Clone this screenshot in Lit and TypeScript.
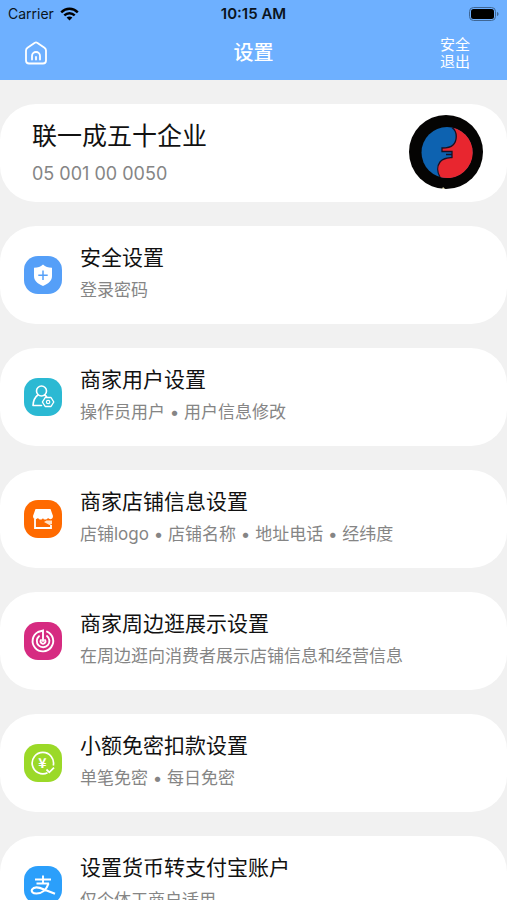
import { LitElement, html, svg, css } from "lit";
import { customElement } from "lit/decorators.js";

interface Entry {
  title: string;
  note: string;
  tone: string;
  icon: unknown;
}

const shield = svg`
  <path d="M19 8.500C21.500 10.800 24 11.500 28 11.700V20C28 24.600 24.800 27.500 19 30C13.200 27.500 10 24.600 10 20V11.700C14 11.500 16.500 10.800 19 8.500Z" fill="#fff"/>
  <path d="M19 14.500V24M14.300 19.200H23.700" fill="none" stroke="#559ff8" stroke-width="1.500"/>`;

const user = svg`
  <g fill="none" stroke="#fff" stroke-width="1.600" stroke-linejoin="round" stroke-linecap="round">
    <circle cx="17.500" cy="13" r="5"/>
    <path d="M13.800 17C10.500 19.500 9.300 22.500 9 27.500H17.500M20.500 17L22.500 18.500"/>
    <path d="M21.200 19.500H27L29.800 24L27 28.500H21.200L18.400 24Z" stroke-width="1.400"/>
    <circle cx="24.100" cy="24" r="1.700" stroke-width="1.200"/>
  </g>`;

const shop = svg`
  <path d="M11.500 9H26.500L29 16C29 19.500 25.500 20 24 18C22.500 20 19.500 20 19 18C18 20 15.500 20 14 18C12.500 20 9 19.500 9 16Z" fill="#fff"/>
  <path d="M11 19V28H27V25" fill="none" stroke="#fff" stroke-width="1.800"/>
  <path d="M20 22L22.500 20.500H28V24L25.500 25Z" fill="#ffe2c8"/>`;

const radar = svg`
  <g fill="none" stroke="#fff" stroke-width="1.900" stroke-linecap="round">
    <path d="M23 9.600A10.300 10.300 0 1 1 14 10L19 8.500V19"/>
    <path d="M23 14A6.300 6.300 0 1 1 15 14.200"/>
    <path d="M21 18A2.400 2.400 0 1 1 17 18"/>
  </g>`;

const yuan = svg`
  <path d="M23.500 28.800A10.700 10.700 0 1 1 29.300 21.500" fill="none" stroke="#fff" stroke-width="1.700"/>
  <path d="M22.500 25.500L25.300 28.300L30 23.700" fill="none" stroke="#fff" stroke-width="1.800"/>
  <text x="18.500" y="24" text-anchor="middle" font-size="14" font-weight="700" font-family="Noto Sans CJK SC, sans-serif" fill="#fff">¥</text>`;

const alipay = svg`
  <g fill="none" stroke="#fff" stroke-width="1.900">
    <path d="M11 13.500H27M19 9.500V17.500M12.500 17.500H25"/>
    <path d="M24.500 17.500C22.500 24 17.500 27.500 12.500 27.500C8.500 27.500 7 25.500 8 23.500C10 20.500 15 21.200 20 23.500L31 27.800" stroke-width="2.200"/>
  </g>`;

const entries: Entry[] = [
  { title: "安全设置", note: "登录密码", tone: "blue", icon: shield },
  { title: "商家用户设置", note: "操作员用户 • 用户信息修改", tone: "teal", icon: user },
  { title: "商家店铺信息设置", note: "店铺logo • 店铺名称 • 地址电话 • 经纬度", tone: "orange", icon: shop },
  { title: "商家周边逛展示设置", note: "在周边逛向消费者展示店铺信息和经营信息", tone: "pink", icon: radar },
  { title: "小额免密扣款设置", note: "单笔免密 • 每日免密", tone: "green", icon: yuan },
  { title: "设置货币转支付宝账户", note: "仅个体工商户适用", tone: "azure", icon: alipay },
];

@customElement("app-root")
export class AppRoot extends LitElement {
  static styles = css`
    :host {
      display: flex;
      flex-direction: column;
      height: 100vh;
      background: #f1f1f1;
      color: #111;
      font-family: Inter, "Noto Sans CJK SC", sans-serif;
    }
    * { box-sizing: border-box; }
    svg { display: block; }
    h1, h2, p { margin: 0; font-weight: 400; }
    button { border: 0; padding: 0; background: none; font: inherit; color: inherit; cursor: pointer; }
    header { flex: none; background: #6eb0ff; }
    .status, .nav {
      display: grid;
      grid-template-columns: 1fr auto 1fr;
      align-items: center;
    }
    .status {
      height: 27px;
      padding: 0 8px;
      font-size: 14px;
      line-height: 20px;
      color: #0b1420;
    }
    .carrier { display: flex; align-items: center; gap: 6px; }
    .time { font-size: 15px; font-weight: 600; }
    .end { justify-self: end; }
    .nav { height: 51px; margin-bottom: 2px; padding: 0 24px; color: #fff; }
    .nav h1 { font-size: 20px; line-height: 28px; font-weight: 500; }
    .home { justify-self: start; }
    .exit { width: 30px; margin-right: 13px; font-size: 15px; line-height: 17px; }
    main {
      flex: 1;
      min-height: 0;
      overflow-y: auto;
      scrollbar-width: none;
      display: flex;
      flex-direction: column;
      gap: 24px;
      padding: 24px 0;
    }
    .card {
      flex: none;
      display: flex;
      align-items: center;
      width: 100%;
      min-height: 98px;
      border-radius: 36px;
      background: #fff;
      text-align: left;
    }
    .profile { justify-content: space-between; padding: 0 24px 2px 32px; }
    .profile h2 { font-size: 25px; line-height: 36px; }
    .number { margin-top: 8px; font-size: 18px; line-height: 24px; color: #858585; }
    .entry { gap: 18px; padding: 0 24px; }
    .tile { flex: none; width: 38px; height: 38px; border-radius: 14px; }
    .blue { background: #559ff8; }
    .teal { background: #2bb9d3; }
    .orange { background: #ff6a00; }
    .pink { background: #d62b81; }
    .green { background: #9bd928; }
    .azure { background: #2b9ffb; }
    .text { display: flex; flex-direction: column; gap: 4px; padding-bottom: 4px; }
    .title { font-size: 21px; line-height: 30px; }
    .note { font-size: 17px; line-height: 26px; color: #858585; }
  `;

  render() {
    return html`
      <header>
        <div class="status">
          <span class="carrier">Carrier
            <svg width="19" height="14" viewBox="0 0 19 14" fill="none" stroke="#000" stroke-width="2.400">
              <path d="M1.200 5.300C6 .600 13 .600 17.800 5.300M4.300 8.400C7.300 5.500 11.700 5.500 14.700 8.400"/>
              <path d="M9.500 13.500L6.600 10.600C8.300 9.200 10.700 9.200 12.400 10.600Z" fill="#000" stroke="none"/>
            </svg>
          </span>
          <span class="time">10:15 AM</span>
          <svg class="end" width="30" height="14" viewBox="0 0 30 14">
            <rect x=".500" y=".500" width="26" height="13" rx="4" fill="none" stroke="#3f6694"/>
            <rect x="2" y="2" width="23" height="10" rx="2.500"/>
            <path d="M28 5C30 5.500 30 8.500 28 9Z" fill="#3f6694"/>
          </svg>
        </div>
        <div class="nav">
          <button class="home" aria-label="首页">
            <svg width="24" height="24" viewBox="0 0 24 24" fill="none" stroke="#fff" stroke-width="1.800" stroke-linejoin="round" stroke-linecap="round">
              <path d="M10.500 1.900Q12 1 13.500 1.900L20.500 6.700Q22 7.800 22 9.500V19.500Q22 22.500 19 22.500H5Q2 22.500 2 19.500V9.500Q2 7.800 3.500 6.700Z"/>
              <path d="M8 18.500V15A4 4 0 0 1 16 15V18.500M12 18.500V16"/>
            </svg>
          </button>
          <h1>设置</h1>
          <button class="exit end">安全退出</button>
        </div>
      </header>
      <main>
        <section class="card profile">
          <div>
            <h2>联一成五十企业</h2>
            <p class="number">05 001 00 0050</p>
          </div>
          <svg width="74" height="74" viewBox="0 0 74 74" role="img" aria-label="企业标志">
            <circle cx="37" cy="37" r="37" fill="#050403"/>
            <circle cx="38" cy="37.500" r="25.500" fill="#0d62b0"/>
            <path d="M43 12.500A25.500 25.500 0 1 1 31 62C27 54 28 47 34 44.500C37 43 40 43 43 42V37H33V33C42 33 47 29 47 21C47 17 46 14 43 12.500Z" fill="#e8262f"/>
            <path d="M43 12.500C49 17 48 26 44 30C41 33 37 33 33 33V36.500H43V42.500C38 43 34 43 31 47C28 51 28 57 31 62" fill="none" stroke="#161225" stroke-width="1.300"/>
            <path d="M37 39.500H43" fill="none" stroke="#161225" stroke-width="1.500"/>
            <path d="M34 72L36 74H33Z" fill="#e8dfb8"/>
          </svg>
        </section>
        ${entries.map(
          (e) => html`
            <button class="card entry">
              <svg class="tile ${e.tone}" viewBox="0 0 38 38" aria-hidden="true">${e.icon}</svg>
              <span class="text">
                <span class="title">${e.title}</span>
                <span class="note">${e.note}</span>
              </span>
            </button>
          `,
        )}
      </main>
    `;
  }
}
